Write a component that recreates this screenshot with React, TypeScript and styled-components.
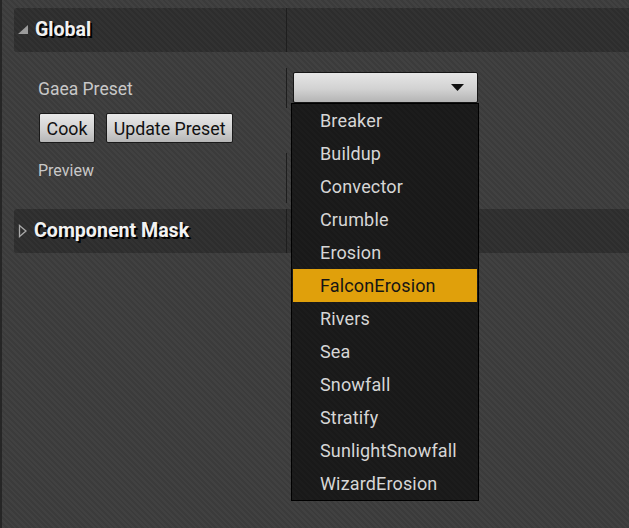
import React from "react";
import styled, { createGlobalStyle } from "styled-components";

const Global = createGlobalStyle`
  html, body { margin: 0; padding: 0; }
  body {
    width: 629px; height: 528px; overflow: hidden;
    font-family: Roboto, "Liberation Sans", sans-serif;
    background-color: #3e3e3e;
    background-image: repeating-linear-gradient(45deg, #3b3b3b 0px, #3b3b3b 2px, #414141 2px, #414141 4px);
  }
`;

const Page = styled.div`
  position: relative;
  display: flex;
  height: 528px;
`;

const EdgeStrip = styled.div`
  width: 2px;
  background: #262626;
  flex: none;
`;

const Panel = styled.div`
  flex: 1;
  display: flex;
  flex-direction: column;
  padding: 8px 0 0 12px;
`;

const CategoryHeader = styled.div`
  display: grid;
  grid-template-columns: 272px 1px 1fr;
  height: 44px;
  border-radius: 3px 0 0 3px;
  background-color: #2f2f2f;
  background-image: repeating-linear-gradient(45deg, #2d2d2d 0px, #2d2d2d 2px, #323232 2px, #323232 4px);
`;

const HeaderName = styled.div`
  display: flex;
  align-items: center;
  gap: 6px;
  padding-left: 4px;
  padding-bottom: 1px;
  font-weight: 700;
  font-size: 19.6px;
  color: #f2f2f2;
  text-shadow: 2px 2px 0 #000;
`;

const Divider = styled.div`
  background: #1e1e1e;
`;

const Row = styled.div<{ $h: number }>`
  display: grid;
  grid-template-columns: 272px 1px 1fr;
  height: ${(p) => p.$h}px;
`;

const Label = styled.div<{ $size: number; $top?: boolean }>`
  display: flex;
  align-items: ${(p) => (p.$top ? "flex-start" : "center")};
  padding-top: ${(p) => (p.$top ? 8 : 1)}px;
  padding-left: 24px;
  font-size: ${(p) => p.$size}px;
  color: #c8c8c8;
`;

const ValueCell = styled.div`
  display: flex;
  align-items: flex-start;
  padding-left: 6px;
`;

const Combo = styled.div`
  width: 185px;
  height: 31px;
  box-sizing: border-box;
  border: 1px solid #161616;
  border-radius: 2px;
  background: linear-gradient(#e6e6e6, #d2d2d2 55%, #b4b4b4);
  display: flex;
  align-items: center;
  justify-content: flex-end;
  padding-right: 13px;
  margin-top: 4px;
`;

const ButtonRow = styled.div`
  display: flex;
  gap: 11px;
  height: 45px;
  padding: 5px 0 0 25px;
  box-sizing: border-box;
`;

const Button = styled.div`
  height: 30px;
  box-sizing: border-box;
  padding: 0 6.6px;
  display: flex;
  align-items: center;
  border: 1px solid #1a1a1a;
  border-radius: 2px;
  background: linear-gradient(#e8e8e8, #cfcfcf 60%, #b6b6b6);
  font-size: 17.8px;
  color: #111;
`;

const Spacer = styled.div<{ $h: number }>`
  height: ${(p) => p.$h}px;
`;

const Menu = styled.div`
  position: absolute;
  left: 291px;
  top: 103px;
  width: 186px;
  border: 1px solid #000;
  background-color: #1a1a1a;
  background-image: repeating-linear-gradient(45deg, #191919 0px, #191919 2px, #1c1c1c 2px, #1c1c1c 4px);
  display: flex;
  flex-direction: column;
`;

const MenuItem = styled.div<{ $active?: boolean }>`
  height: 33px;
  display: flex;
  align-items: center;
  padding-left: ${(p) => (p.$active ? 27 : 28)}px;
  padding-bottom: 1px;
  box-sizing: border-box;
  margin: 0 ${(p) => (p.$active ? 1 : 0)}px;
  font-size: 18px;
  letter-spacing: 0.15px;
  color: ${(p) => (p.$active ? "#151515" : "#d6d6d6")};
  background: ${(p) => (p.$active ? "#e0a00b" : "transparent")};
`;

const items = [
  "Breaker",
  "Buildup",
  "Convector",
  "Crumble",
  "Erosion",
  "FalconErosion",
  "Rivers",
  "Sea",
  "Snowfall",
  "Stratify",
  "SunlightSnowfall",
  "WizardErosion",
];

const ExpandedArrow = () => (
  <svg width="11" height="10" viewBox="0 0 11 10">
    <polygon points="10,0 10,9 0,9" fill="#9c9c9c" />
  </svg>
);

const CollapsedArrow = () => (
  <svg width="10" height="14" viewBox="0 0 10 14">
    <polygon points="1.5,1.5 8,7 1.5,12.5" fill="none" stroke="#a8a8a8" strokeWidth="1.3" />
  </svg>
);

export default function App() {
  return (
    <>
      <Global />
      <Page>
        <EdgeStrip />
        <Panel>
          <CategoryHeader>
            <HeaderName>
              <ExpandedArrow />
              Global
            </HeaderName>
            <Divider />
            <div />
          </CategoryHeader>
          <Spacer $h={16} />
          <Row $h={40}>
            <Label $size={17.5}>Gaea Preset</Label>
            <Divider />
            <ValueCell>
              <Combo>
                <svg width="13" height="7" viewBox="0 0 13 7">
                  <polygon points="0,0 13,0 6.5,7" fill="#111" />
                </svg>
              </Combo>
            </ValueCell>
          </Row>
          <ButtonRow>
            <Button>Cook</Button>
            <Button>Update Preset</Button>
          </ButtonRow>
          <Row $h={50}>
            <Label $size={16} $top>Preview</Label>
            <Divider />
            <div />
          </Row>
          <Spacer $h={6} />
          <CategoryHeader>
            <HeaderName>
              <CollapsedArrow />
              Component Mask
            </HeaderName>
            <Divider />
            <div />
          </CategoryHeader>
        </Panel>
        <Menu>
          {items.map((it) => (
            <MenuItem key={it} $active={it === "FalconErosion"}>
              {it}
            </MenuItem>
          ))}
        </Menu>
      </Page>
    </>
  );
}
